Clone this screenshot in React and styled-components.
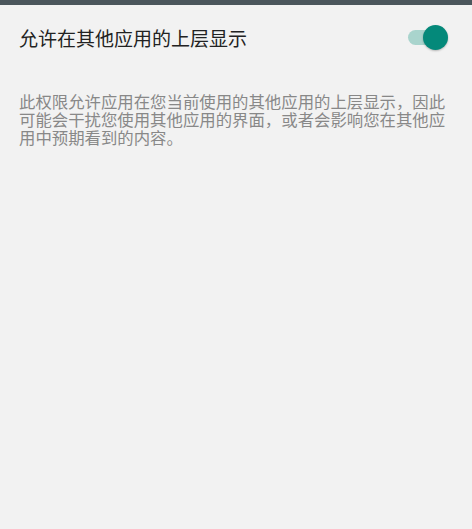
import React from "react";
import styled, { createGlobalStyle } from "styled-components";

const Global = createGlobalStyle`
  html, body { margin: 0; padding: 0; background: #f2f2f2; }
  body { font-family: "Noto Sans CJK SC", "Noto Sans", sans-serif; }
`;

const Page = styled.div`
  width: 472px;
  height: 529px;
  background: #f2f2f2;
  display: flex;
  flex-direction: column;
  overflow: hidden;
`;

const TopBar = styled.div`
  height: 5px;
  background: #4b565c;
`;

const Row = styled.div`
  display: flex;
  align-items: center;
  justify-content: space-between;
  padding: 0 28px 0 19px;
  height: 64px;
`;

const Title = styled.div`
  font-size: 19px;
  color: #222;
  line-height: 1;
`;

const Track = styled.div`
  position: relative;
  width: 36px;
  height: 15px;
  border-radius: 8px;
  background: #a9d4cd;
`;

const Thumb = styled.div`
  position: absolute;
  right: -4px;
  top: -5px;
  width: 25px;
  height: 25px;
  border-radius: 50%;
  background: #04897a;
  box-shadow: 0 1px 2px rgba(0, 0, 0, 0.25);
`;

const Desc = styled.p`
  margin: 24px 0 0;
  padding: 0 19px;
  font-size: 16.4px;
  line-height: 17.8px;
  color: #888;
`;

export default function App() {
  return (
    <Page>
      <Global />
      <TopBar />
      <Row>
        <Title>允许在其他应用的上层显示</Title>
        <Track>
          <Thumb />
        </Track>
      </Row>
      <Desc>
        此权限允许应用在您当前使用的其他应用的上层显示，因此可能会干扰您使用其他应用的界面，或者会影响您在其他应用中预期看到的内容。
      </Desc>
    </Page>
  );
}
